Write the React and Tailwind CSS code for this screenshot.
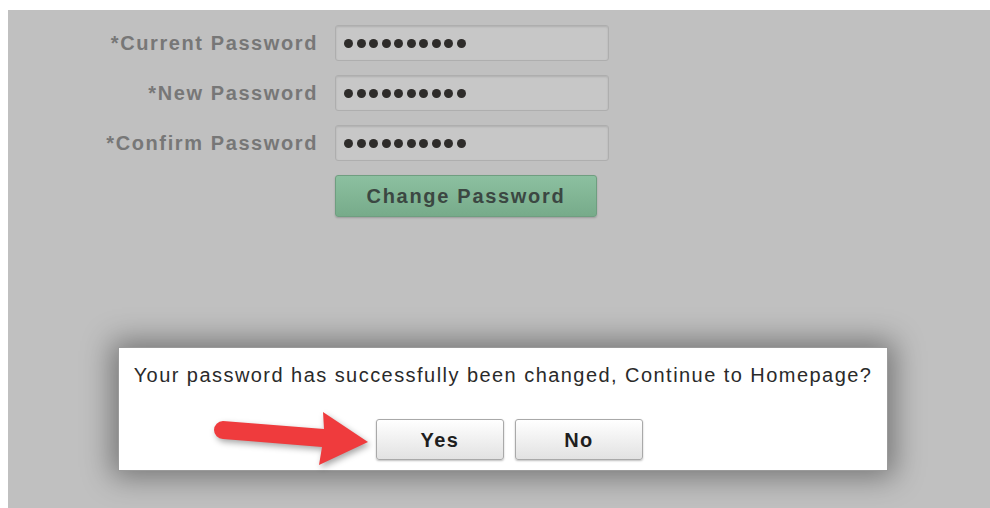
import React from "react"

const fields = ["*Current Password", "*New Password", "*Confirm Password"]

function MaskedValue({ count = 10 }) {
    return (
        <div className="flex items-center gap-[3.5px]">
            {Array.from({ length: count }).map((_, i) => (
                <span key={i} className="block w-[9px] h-[9px] rounded-full bg-[#2e2c2a]" />
            ))}
        </div>
    )
}

function DialogButton({ children }) {
    return (
        <button className="w-[128px] h-[41px] rounded-[3px] border border-[#a9a9a9] bg-gradient-to-b from-[#ffffff] to-[#e2e2e2] shadow-[0_1px_2px_rgba(0,0,0,0.25)] text-[20px] font-bold tracking-[1.5px] text-[#1e1e1e] flex items-center justify-center">
            {children}
        </button>
    )
}

function Arrow() {
    // red callout arrow pointing at the Yes button
    return (
        <svg
            width="170" height="72" viewBox="0 0 170 72"
            className="absolute left-[92px] top-[54px] drop-shadow-[2px_3px_3px_rgba(0,0,0,0.35)]">
            <path
                d="M 12 19 L 113 27 L 112 10 L 157 40 L 108 63 L 111 45 L 12 37 A 9 9 0 0 1 12 19 Z"
                fill="#ef3b3d" />
        </svg>
    )
}

export default function App() {
    return (
        <div className="w-[990px] h-[508px] bg-white pt-[10px] pl-[8px] overflow-hidden" style={{ fontFamily: '"Liberation Sans", Arial, sans-serif' }}>
            <div className="w-full h-full bg-[#c0c0c0] pt-[15px]">
                <div className="grid grid-cols-[310px_274px] gap-x-[17px] gap-y-[14px]">
                    {fields.map(label => (
                        <React.Fragment key={label}>
                            <div className="text-right text-[20px] font-bold tracking-[1.6px] text-[#777777] self-center">
                                {label}
                            </div>
                            <div className="h-[36px] rounded-[3px] border border-[#aeaeae] bg-[#c7c7c7] shadow-[inset_0_1px_2px_rgba(0,0,0,0.12)] flex items-center pl-[8px]">
                                <MaskedValue />
                            </div>
                        </React.Fragment>
                    ))}
                    <div />
                    <button className="w-[262px] h-[42px] rounded-[3px] border border-[#6f9e80] bg-gradient-to-b from-[#8cc0a0] to-[#77ab8a] shadow-[0_1px_2px_rgba(0,0,0,0.2)] text-[20px] font-bold tracking-[1.7px] text-[#3b4742] flex items-center justify-center">
                        Change Password
                    </button>
                </div>

                <div className="relative mt-[130px] ml-[110px] w-[770px] h-[124px] bg-white border border-[#9a9a9a] shadow-[0_0_28px_6px_rgba(0,0,0,0.4)] pt-[15px]">
                    <p className="text-center text-[20px] leading-[24px] tracking-[1.45px] text-[#2a2a2a]">
                        Your password has successfully been changed, Continue to Homepage?
                    </p>
                    <div className="flex justify-center gap-[11px] pl-[13px] mt-[32px]">
                        <DialogButton>Yes</DialogButton>
                        <DialogButton>No</DialogButton>
                    </div>
                    <Arrow />
                </div>
            </div>
        </div>
    )
}
